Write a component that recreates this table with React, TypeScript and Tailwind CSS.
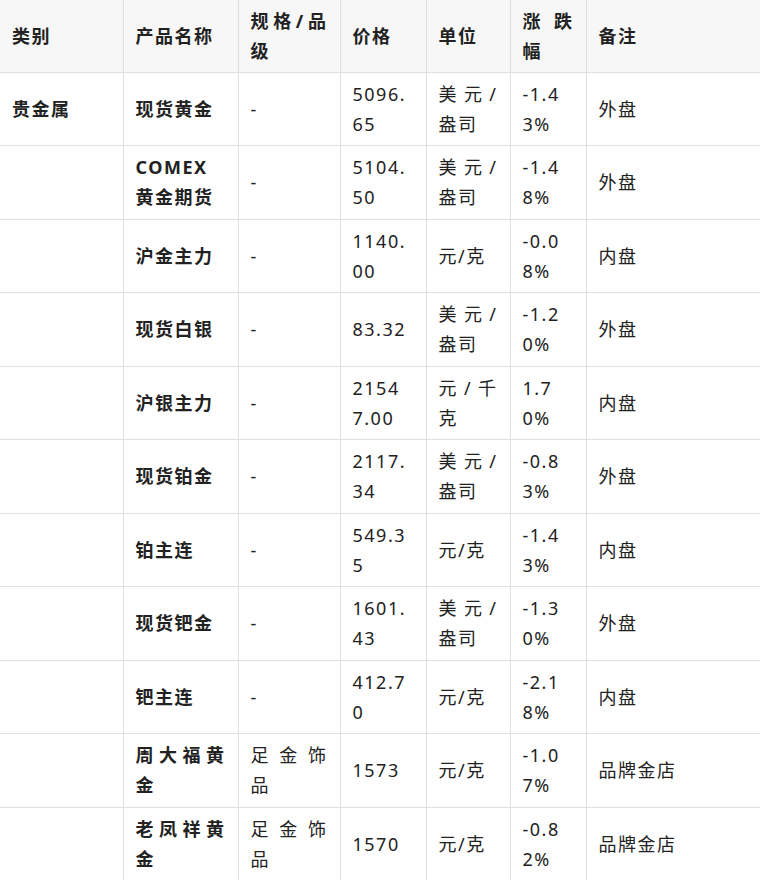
import React from 'react';

type Row = {
  cat: string;
  name: string;
  spec: string;
  price: string;
  unit: string;
  change: string;
  note: string;
};

const rows: Row[] = [
  { cat: '贵金属', name: '现货黄金', spec: '-', price: '5096.65', unit: '美元/盎司', change: '-1.43%', note: '外盘' },
  { cat: '', name: 'COMEX 黄金期货', spec: '-', price: '5104.50', unit: '美元/盎司', change: '-1.48%', note: '外盘' },
  { cat: '', name: '沪金主力', spec: '-', price: '1140.00', unit: '元/克', change: '-0.08%', note: '内盘' },
  { cat: '', name: '现货白银', spec: '-', price: '83.32', unit: '美元/盎司', change: '-1.20%', note: '外盘' },
  { cat: '', name: '沪银主力', spec: '-', price: '21547.00', unit: '元/千克', change: '1.70%', note: '内盘' },
  { cat: '', name: '现货铂金', spec: '-', price: '2117.34', unit: '美元/盎司', change: '-0.83%', note: '外盘' },
  { cat: '', name: '铂主连', spec: '-', price: '549.35', unit: '元/克', change: '-1.43%', note: '内盘' },
  { cat: '', name: '现货钯金', spec: '-', price: '1601.43', unit: '美元/盎司', change: '-1.30%', note: '外盘' },
  { cat: '', name: '钯主连', spec: '-', price: '412.70', unit: '元/克', change: '-2.18%', note: '内盘' },
  { cat: '', name: '周大福黄金', spec: '足金饰品', price: '1573', unit: '元/克', change: '-1.07%', note: '品牌金店' },
  { cat: '', name: '老凤祥黄金', spec: '足金饰品', price: '1570', unit: '元/克', change: '-0.82%', note: '品牌金店' },
];

const headers = ['类别', '产品名称', '规格/品级', '价格', '单位', '涨跌幅', '备注'];
const widths = [123, 115, 102, 86, 84, 76, 174];

const cell = 'px-3 align-middle text-justify break-all leading-[30.25px] border-[#dfdfdf]';

export default function App() {
  return (
    <div
      className="w-[760px] h-[880px] overflow-hidden bg-white text-[#222] text-[18px] tracking-[1.5px]"
      style={{ fontFamily: '"Noto Sans", "Noto Sans CJK SC", sans-serif' }}
    >
      <table className="table-fixed border-collapse w-[760px]">
        <colgroup>
          {widths.map((w, i) => (
            <col key={i} style={{ width: w }} />
          ))}
        </colgroup>
        <thead>
          <tr className="bg-[#f7f7f7]">
            {headers.map((h, i) => (
              <th
                key={h}
                className={`${cell} py-[5.5px] font-bold border-b ${i > 0 ? 'border-l' : ''}`}
              >
                {h}
              </th>
            ))}
          </tr>
        </thead>
        <tbody>
          {rows.map((r, idx) => (
            <tr key={idx}>
              <td className={`${cell} py-[6px] font-bold border-b`}>{r.cat}</td>
              <td className={`${cell} py-[6px] font-bold border-b border-l`}>{r.name}</td>
              <td className={`${cell} py-[6px] border-b border-l`}>{r.spec}</td>
              <td className={`${cell} py-[6px] border-b border-l`}>{r.price}</td>
              <td className={`${cell} py-[6px] border-b border-l`}>{r.unit}</td>
              <td className={`${cell} py-[6px] border-b border-l`}>{r.change}</td>
              <td className={`${cell} py-[6px] border-b border-l`}>{r.note}</td>
            </tr>
          ))}
        </tbody>
      </table>
    </div>
  );
}
